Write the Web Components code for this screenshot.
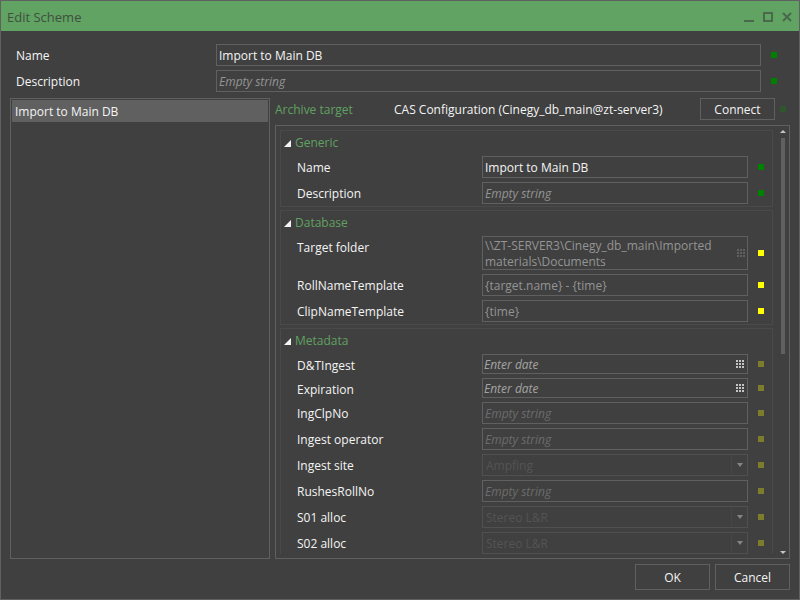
<!DOCTYPE html>
<html lang="en">
<head>
<meta charset="utf-8">
<title>Edit Scheme</title>
<style>
  html, body {
    height: 100%;
    margin: 0;
  }
  body {
    background: #404040;
    color: #f4f4f4;
    font: 12px/16px "Open Sans", "Noto Sans", sans-serif;
    --line: #606060;
    --accent: #60a060;
  }
</style>
</head>
<body>
<scheme-window>
  <title-bar slot="title">Edit Scheme</title-bar>
  <field-row slot="form" label="Name" value="Import to Main DB" mark="green"></field-row>
  <field-row slot="form" label="Description" placeholder="Empty string" mark="green"></field-row>
  <item-list slot="list">
    <list-item selected>Import to Main DB</list-item>
  </item-list>
  <target-bar slot="target" caption="Archive target" action="Connect">CAS Configuration (Cinegy_db_main@zt-server3)</target-bar>
  <scroll-panel slot="details">
    <group-box caption="Generic">
      <field-row label="Name" value="Import to Main DB" mark="green"></field-row>
      <field-row label="Description" placeholder="Empty string" mark="green"></field-row>
    </group-box>
    <group-box caption="Database">
      <field-row kind="folder" label="Target folder" value="\\ZT-SERVER3\Cinegy_db_main\Imported materials\Documents" mark="yellow" muted></field-row>
      <field-row label="RollNameTemplate" value="{target.name} - {time}" mark="yellow" muted></field-row>
      <field-row label="ClipNameTemplate" value="{time}" mark="yellow" muted></field-row>
    </group-box>
    <group-box caption="Metadata">
      <field-row kind="date" label="D&amp;TIngest" placeholder="Enter date" mark="olive"></field-row>
      <field-row kind="date" label="Expiration" placeholder="Enter date" mark="olive"></field-row>
      <field-row label="IngClpNo" placeholder="Empty string" mark="olive" inactive></field-row>
      <field-row label="Ingest operator" placeholder="Empty string" mark="olive" inactive></field-row>
      <field-row kind="select" label="Ingest site" value="Ampfing" mark="olive"></field-row>
      <field-row label="RushesRollNo" placeholder="Empty string" mark="olive" inactive></field-row>
      <field-row kind="select" label="S01 alloc" value="Stereo L&amp;R" mark="olive"></field-row>
      <field-row kind="select" label="S02 alloc" value="Stereo L&amp;R" mark="olive"></field-row>
    </group-box>
  </scroll-panel>
  <push-button slot="actions">OK</push-button>
  <push-button slot="actions">Cancel</push-button>
</scheme-window>

<template id="scheme-window">
  <style>
    :host {
      display: flex;
      flex-direction: column;
      box-sizing: border-box;
      height: 100vh;
      border: 1px solid var(--line);
    }
    .form {
      display: flex;
      flex-direction: column;
      gap: 4px;
      padding: 13px 22px 6px 15px;
      --label-width: 200px;
    }
    .main {
      flex: 1;
      min-height: 0;
      display: grid;
      grid-template-columns: 260px minmax(0, 1fr);
      gap: 5px;
      padding: 0 9px;
    }
    .right {
      display: flex;
      flex-direction: column;
      gap: 5px;
      min-height: 0;
    }
    .actions {
      display: flex;
      justify-content: flex-end;
      gap: 5px;
      padding: 5px 9px 9px;
      --button-height: 26px;
    }
  </style>
  <slot name="title"></slot>
  <div class="form"><slot name="form"></slot></div>
  <div class="main">
    <slot name="list"></slot>
    <div class="right">
      <slot name="target"></slot>
      <slot name="details"></slot>
    </div>
  </div>
  <div class="actions"><slot name="actions"></slot></div>
</template>

<template id="title-bar">
  <style>
    :host {
      display: flex;
      align-items: center;
      height: 28px;
      padding: 2px 7px 0 6px;
      background: #60a362;
      color: #404f40;
      font-size: 13px;
    }
    .text { flex: 1; }
    button {
      display: flex;
      padding: 0;
      margin-left: 9px;
      border: 0;
      background: none;
      color: #4a694a;
    }
  </style>
  <span class="text"><slot></slot></span>
  <button aria-label="Minimize"><svg width="10" height="10"><path d="M0 8h10v2H0z" fill="currentColor"/></svg></button>
  <button aria-label="Maximize"><svg width="10" height="10"><path d="M1 1h8v8H1z" fill="none" stroke="currentColor" stroke-width="2"/></svg></button>
  <button aria-label="Close"><svg width="10" height="10"><path d="M1 1l8 8M9 1l-8 8" fill="none" stroke="currentColor" stroke-width="2"/></svg></button>
</template>

<template id="push-button">
  <style>
    :host { display: block; }
    button {
      box-sizing: border-box;
      width: 75px;
      height: var(--button-height, 22px);
      padding: 1px 0 0;
      border: 1px solid var(--line);
      background: none;
      color: inherit;
      font: inherit;
    }
  </style>
  <button><slot></slot></button>
</template>

<template id="item-list">
  <style>
    :host {
      display: block;
      box-sizing: border-box;
      padding: 1px;
      border: 1px solid var(--line);
    }
  </style>
  <slot></slot>
</template>

<template id="list-item">
  <style>
    :host {
      display: block;
      padding: 4px 3px 2px;
    }
    :host([selected]) { background: #606060; }
  </style>
  <slot></slot>
</template>

<template id="state-mark">
  <style>
    :host {
      display: block;
      flex: none;
      width: 6px;
      height: 6px;
      background: #008000;
    }
    :host([color="yellow"]) { background: #ffff00; }
    :host([color="olive"]) { background: #7c7c2a; }
    :host([color="dim"]) { background: #2e572e; }
  </style>
</template>

<template id="target-bar">
  <style>
    :host {
      display: flex;
      align-items: center;
      padding-right: 4px;
    }
    .caption {
      width: 119px;
      padding-top: 2px;
      color: var(--accent);
    }
    .text {
      flex: 1;
      padding-top: 2px;
    }
    state-mark { margin-left: 5px; }
  </style>
  <span class="caption"></span>
  <span class="text"><slot></slot></span>
  <push-button></push-button>
  <state-mark color="dim"></state-mark>
</template>

<template id="scroll-panel">
  <style>
    :host {
      flex: 1;
      display: flex;
      min-height: 0;
      box-sizing: border-box;
      padding: 4px 3px 4px 4px;
      border: 1px solid var(--line);
      --label-width: 185px;
    }
    .content {
      flex: 1;
      min-width: 0;
      display: flex;
      flex-direction: column;
      gap: 3px;
      overflow-y: auto;
      scrollbar-width: none;
    }
    .bar {
      display: flex;
      flex-direction: column;
      align-items: center;
      gap: 5px;
      width: 6px;
      margin-left: 7px;
    }
    .track {
      flex: 1;
      width: 4px;
    }
    .thumb {
      height: 53%;
      background: #606060;
    }
    svg { fill: #c4c4c4; }
  </style>
  <div class="content"><slot></slot></div>
  <div class="bar">
    <svg width="6" height="3"><path d="M3 0l3 3H0z"/></svg>
    <div class="track"><div class="thumb"></div></div>
    <svg width="6" height="3"><path d="M0 0h6L3 3z"/></svg>
  </div>
</template>

<template id="group-box">
  <style>
    :host {
      display: block;
      flex: none;
      padding: 0 8px 2px 3px;
      border: 1px solid #4a4a4a;
    }
    .head {
      display: flex;
      align-items: center;
      gap: 3px;
      width: 100%;
      height: 25px;
      padding: 0 0 2px;
      border: 0;
      background: none;
      color: var(--accent);
      font: inherit;
    }
    .head svg { fill: #f4f4f4; }
    .rows {
      display: flex;
      flex-direction: column;
      gap: 4px;
      padding-left: 13px;
    }
    .rows[hidden] { display: none; }
  </style>
  <button class="head" aria-expanded="true">
    <svg width="8" height="8"><path d="M7 1v7H0z"/></svg>
    <span></span>
  </button>
  <div class="rows"><slot></slot></div>
</template>

<template id="field-row">
  <style>
    :host {
      display: flex;
      align-items: center;
    }
    label {
      align-self: flex-start;
      width: var(--label-width);
      line-height: 24px;
      height: 22px;
    }
    .box {
      flex: 1;
      min-width: 0;
      display: flex;
      align-items: center;
      box-sizing: border-box;
      min-height: 22px;
      border: 1px solid var(--line);
    }
    input, textarea, select {
      flex: 1;
      min-width: 0;
      box-sizing: border-box;
      margin: 0;
      padding: 1px 2px 0;
      border: 0;
      outline: 0;
      background: none;
      color: inherit;
      font: inherit;
      opacity: 1;
    }
    input { height: 20px; }
    textarea {
      height: 32px;
      resize: none;
      overflow: hidden;
    }
    select {
      appearance: none;
      height: 20px;
      padding: 1px 3px 0;
      color: #545454;
    }
    ::placeholder {
      color: #949494;
      font-style: italic;
      opacity: 1;
    }
    :host([muted]) .box { color: #949494; }
    :host([inactive]) ::placeholder { color: #6c6c6c; }
    :host([kind="select"]) .box { border-color: #505050; }
    :host([kind="date"]) label { height: 20px; }
    :host([kind="date"]) .box { min-height: 20px; }
    :host([kind="date"]) input { height: 18px; padding: 0 1px; }
    :host([kind="date"]) ::placeholder { color: #a4a4a4; }
    .pick {
      display: flex;
      padding: 0 3px;
      border: 0;
      background: none;
      color: #c4c4c4;
    }
    :host([kind="folder"]) .pick { color: #606060; padding: 0 2px; }
    .arrow {
      display: flex;
      align-items: center;
      justify-content: center;
      width: 15px;
      height: 20px;
      border-left: 1px solid #464646;
      fill: #848484;
    }
    state-mark { margin: 0 0 0 10px; }
  </style>
  <label for="field"></label>
  <div class="box"></div>
  <state-mark></state-mark>
</template>

<script>
const gridIcon = `
  <svg width="8" height="8" fill="currentColor">
    <path d="M0 0h2v2H0zM3 0h2v2H3zM6 0h2v2H6zM0 3h2v2H0zM3 3h2v2H3zM6 3h2v2H6zM0 6h2v2H0zM3 6h2v2H3zM6 6h2v2H6z"/>
  </svg>`;

//markup of the control for each kind of row
const controls = {
  text: `<input id="field" type="text">`,
  date: `<input id="field" type="text"><button class="pick" aria-label="Pick date">${gridIcon}</button>`,
  folder: `<textarea id="field" rows="2"></textarea><button class="pick" aria-label="Browse">${gridIcon}</button>`,
  select: `<select id="field" disabled></select>
    <span class="arrow"><svg width="6" height="4"><path d="M0 0h6L3 4z"/></svg></span>`
};

class BaseElement extends HTMLElement {
  constructor() {
    super();
    this.shadow = this.attachShadow({mode: 'open'});
    let template = document.getElementById(this.localName);
    this.shadow.appendChild(template.content.cloneNode(true));
  }
}

class SchemeWindow extends BaseElement {}
class TitleBar extends BaseElement {}
class PushButton extends BaseElement {}
class ItemList extends BaseElement {}
class ListItem extends BaseElement {}
class StateMark extends BaseElement {}

class TargetBar extends BaseElement {
  connectedCallback() {
    this.shadow.querySelector('.caption').textContent = this.getAttribute('caption');
    this.shadow.querySelector('push-button').textContent = this.getAttribute('action');
  }
}

class ScrollPanel extends BaseElement {
  connectedCallback() {
    let content = this.shadow.querySelector('.content');
    let track = this.shadow.querySelector('.track');
    let thumb = this.shadow.querySelector('.thumb');
    content.addEventListener('scroll', () => {
      let range = content.scrollHeight - content.clientHeight;
      let free = track.clientHeight - thumb.clientHeight;
      thumb.style.transform = `translateY(${range ? free * content.scrollTop / range : 0}px)`;
    });
  }
}

class GroupBox extends BaseElement {
  connectedCallback() {
    let head = this.shadow.querySelector('.head');
    let rows = this.shadow.querySelector('.rows');
    head.querySelector('span').textContent = this.getAttribute('caption');
    head.onclick = () => {
      rows.hidden = !rows.hidden;
      head.setAttribute('aria-expanded', String(!rows.hidden));
    };
  }
}

class FieldRow extends BaseElement {
  connectedCallback() {
    let kind = this.getAttribute('kind') || 'text';
    let value = this.getAttribute('value') || '';
    this.shadow.querySelector('label').textContent = this.getAttribute('label');
    this.shadow.querySelector('state-mark').setAttribute('color', this.getAttribute('mark'));
    this.shadow.querySelector('.box').innerHTML = controls[kind];

    let field = this.shadow.querySelector('#field');
    if (kind === 'select') {
      field.add(new Option(value));
      return;
    }
    field.value = value;
    field.placeholder = this.getAttribute('placeholder') || '';
    field.spellcheck = false;
  }
}

window.customElements.define('state-mark', StateMark);
window.customElements.define('push-button', PushButton);
window.customElements.define('title-bar', TitleBar);
window.customElements.define('list-item', ListItem);
window.customElements.define('item-list', ItemList);
window.customElements.define('target-bar', TargetBar);
window.customElements.define('field-row', FieldRow);
window.customElements.define('group-box', GroupBox);
window.customElements.define('scroll-panel', ScrollPanel);
window.customElements.define('scheme-window', SchemeWindow);
</script>
</body>
</html>
